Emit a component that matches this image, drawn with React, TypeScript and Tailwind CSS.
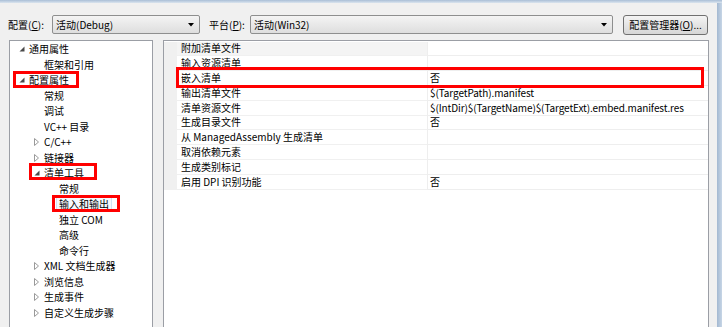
import React from "react";

type TreeItem = {
  label: string;
  level: number;
  arrow?: "open" | "closed";
  selected?: boolean;
};

const treeItems: TreeItem[] = [
  { label: "通用属性", level: 0, arrow: "open" },
  { label: "框架和引用", level: 1 },
  { label: "配置属性", level: 0, arrow: "open" },
  { label: "常规", level: 1 },
  { label: "调试", level: 1 },
  { label: "VC++ 目录", level: 1 },
  { label: "C/C++", level: 1, arrow: "closed" },
  { label: "链接器", level: 1, arrow: "closed" },
  { label: "清单工具", level: 1, arrow: "open" },
  { label: "常规", level: 2 },
  { label: "输入和输出", level: 2, selected: true },
  { label: "独立 COM", level: 2 },
  { label: "高级", level: 2 },
  { label: "命令行", level: 2 },
  { label: "XML 文档生成器", level: 1, arrow: "closed" },
  { label: "浏览信息", level: 1, arrow: "closed" },
  { label: "生成事件", level: 1, arrow: "closed" },
  { label: "自定义生成步骤", level: 1, arrow: "closed" },
];

const props: [string, string][] = [
  ["附加清单文件", ""],
  ["输入资源清单", ""],
  ["嵌入清单", "否"],
  ["输出清单文件", "$(TargetPath).manifest"],
  ["清单资源文件", "$(IntDir)$(TargetName)$(TargetExt).embed.manifest.res"],
  ["生成目录文件", "否"],
  ["从 ManagedAssembly 生成清单", ""],
  ["取消依赖元素", ""],
  ["生成类别标记", ""],
  ["启用 DPI 识别功能", "否"],
];

function Arrow({ kind }: { kind?: "open" | "closed" }) {
  if (kind === "open") {
    return (
      <svg width="6" height="6" viewBox="0 0 6 6" className="ml-[2px]">
        <polygon points="5.5,0.5 5.5,5.5 0.5,5.5" fill="#4a4a4a" />
      </svg>
    );
  }
  if (kind === "closed") {
    return (
      <svg width="5" height="8" viewBox="0 0 5 8" className="ml-[2px]">
        <polygon points="0.5,0.5 4.5,4 0.5,7.5" fill="#fff" stroke="#9a9a9a" strokeWidth="1" />
      </svg>
    );
  }
  return null;
}

function Combo({ text, width }: { text: string; width: string }) {
  return (
    <div
      className={`${width} h-[19px] flex items-center justify-between rounded-[2px] border border-[#8e8f8f] bg-gradient-to-b from-[#f4f4f4] to-[#dedede] pl-[3px] pr-[5px]`}
    >
      <span>{text}</span>
      <svg width="6" height="4" viewBox="0 0 6 4">
        <polygon points="0,0 6,0 3,3.5" fill="#000" />
      </svg>
    </div>
  );
}

export default function App() {
  return (
    <div className="relative w-[722px] h-[327px] overflow-hidden bg-[#f0f0f0] text-[10px] leading-none text-black font-['Noto_Sans_CJK_SC','Noto_Sans',sans-serif]">
      <div className="h-[3px] bg-gradient-to-b from-[#a9bed6] to-[#dbe5ef]" />
      <div className="flex h-[324px]">
        <div className="flex-1 flex flex-col">
          {/* toolbar */}
          <div className="flex items-center pl-[8px] pt-[12px] h-[31px]">
            <span className="w-[44px]">
              配置(<span className="underline">C</span>):
            </span>
            <Combo text="活动(Debug)" width="w-[148px]" />
            <span className="ml-[9px] w-[41px]">
              平台(<span className="underline">P</span>):
            </span>
            <Combo text="活动(Win32)" width="w-[363px]" />
            <button className="ml-[10px] w-[85px] h-[20px] rounded-[3px] border border-[#707070] bg-gradient-to-b from-[#f4f4f4] to-[#d6d6d6]">
              配置管理器(<span className="underline">O</span>)...
            </button>
          </div>

          {/* panels */}
          <div className="flex gap-[10px] pl-[9px] pt-[6px]">
            {/* tree */}
            <div className="w-[144px] h-[300px] border border-[#9b9ea5] bg-white pt-[0.25px]">
              {treeItems.map((it, i) => (
                <div
                  key={i}
                  className="h-[15.5px] flex items-center"
                  style={{ paddingLeft: 7 + it.level * 15 }}
                >
                  <div className="w-[12px] flex items-center">
                    <Arrow kind={it.arrow} />
                  </div>
                  <span
                    className={
                      it.selected
                        ? "px-[2px] py-[2px] -ml-[3px] border border-[#d2e2f3] bg-[#f5f9fd]"
                        : ""
                    }
                  >
                    {it.label}
                  </span>
                </div>
              ))}
            </div>

            {/* property grid */}
            <div className="w-[546px] h-[300px] border border-[#9b9ea5] bg-white pt-[0.6px]">
              {props.map(([name, value], i) => (
                <div key={i} className="flex h-[14.8px]">
                  <div className="w-[13px] bg-[#f0f0f0]" />
                  <div
                    className={`w-[250px] flex items-center pl-[4px] border-b border-[#f0f0f0] ${
                      i === 0 ? "bg-[#f4f4f4]" : ""
                    }`}
                  >
                    {name}
                  </div>
                  <div className="flex-1 flex items-center pl-[2px] border-l border-b border-[#eeeeee] tracking-[-0.1px]">
                    {value}
                  </div>
                </div>
              ))}
            </div>
          </div>
        </div>
        {/* window frame right */}
        <div className="w-[7px] flex">
          <div className="w-[2px] bg-[#f0f0f0]" />
          <div className="flex-1 bg-gradient-to-r from-[#a3b8d1] to-[#c7d6e6]" />
        </div>
      </div>

      {/* annotation boxes */}
      <div className="absolute left-[13px] top-[71px] w-[66px] h-[17px] border-[3px] border-[#ff0000]" />
      <div className="absolute left-[29px] top-[163px] w-[68px] h-[17px] border-[3px] border-[#ff0000]" />
      <div className="absolute left-[52px] top-[195px] w-[68px] h-[17px] border-[3px] border-[#ff0000]" />
      <div className="absolute left-[176px] top-[67px] w-[528px] h-[21px] border-[3px] border-[#ff0000]" />
    </div>
  );
}
